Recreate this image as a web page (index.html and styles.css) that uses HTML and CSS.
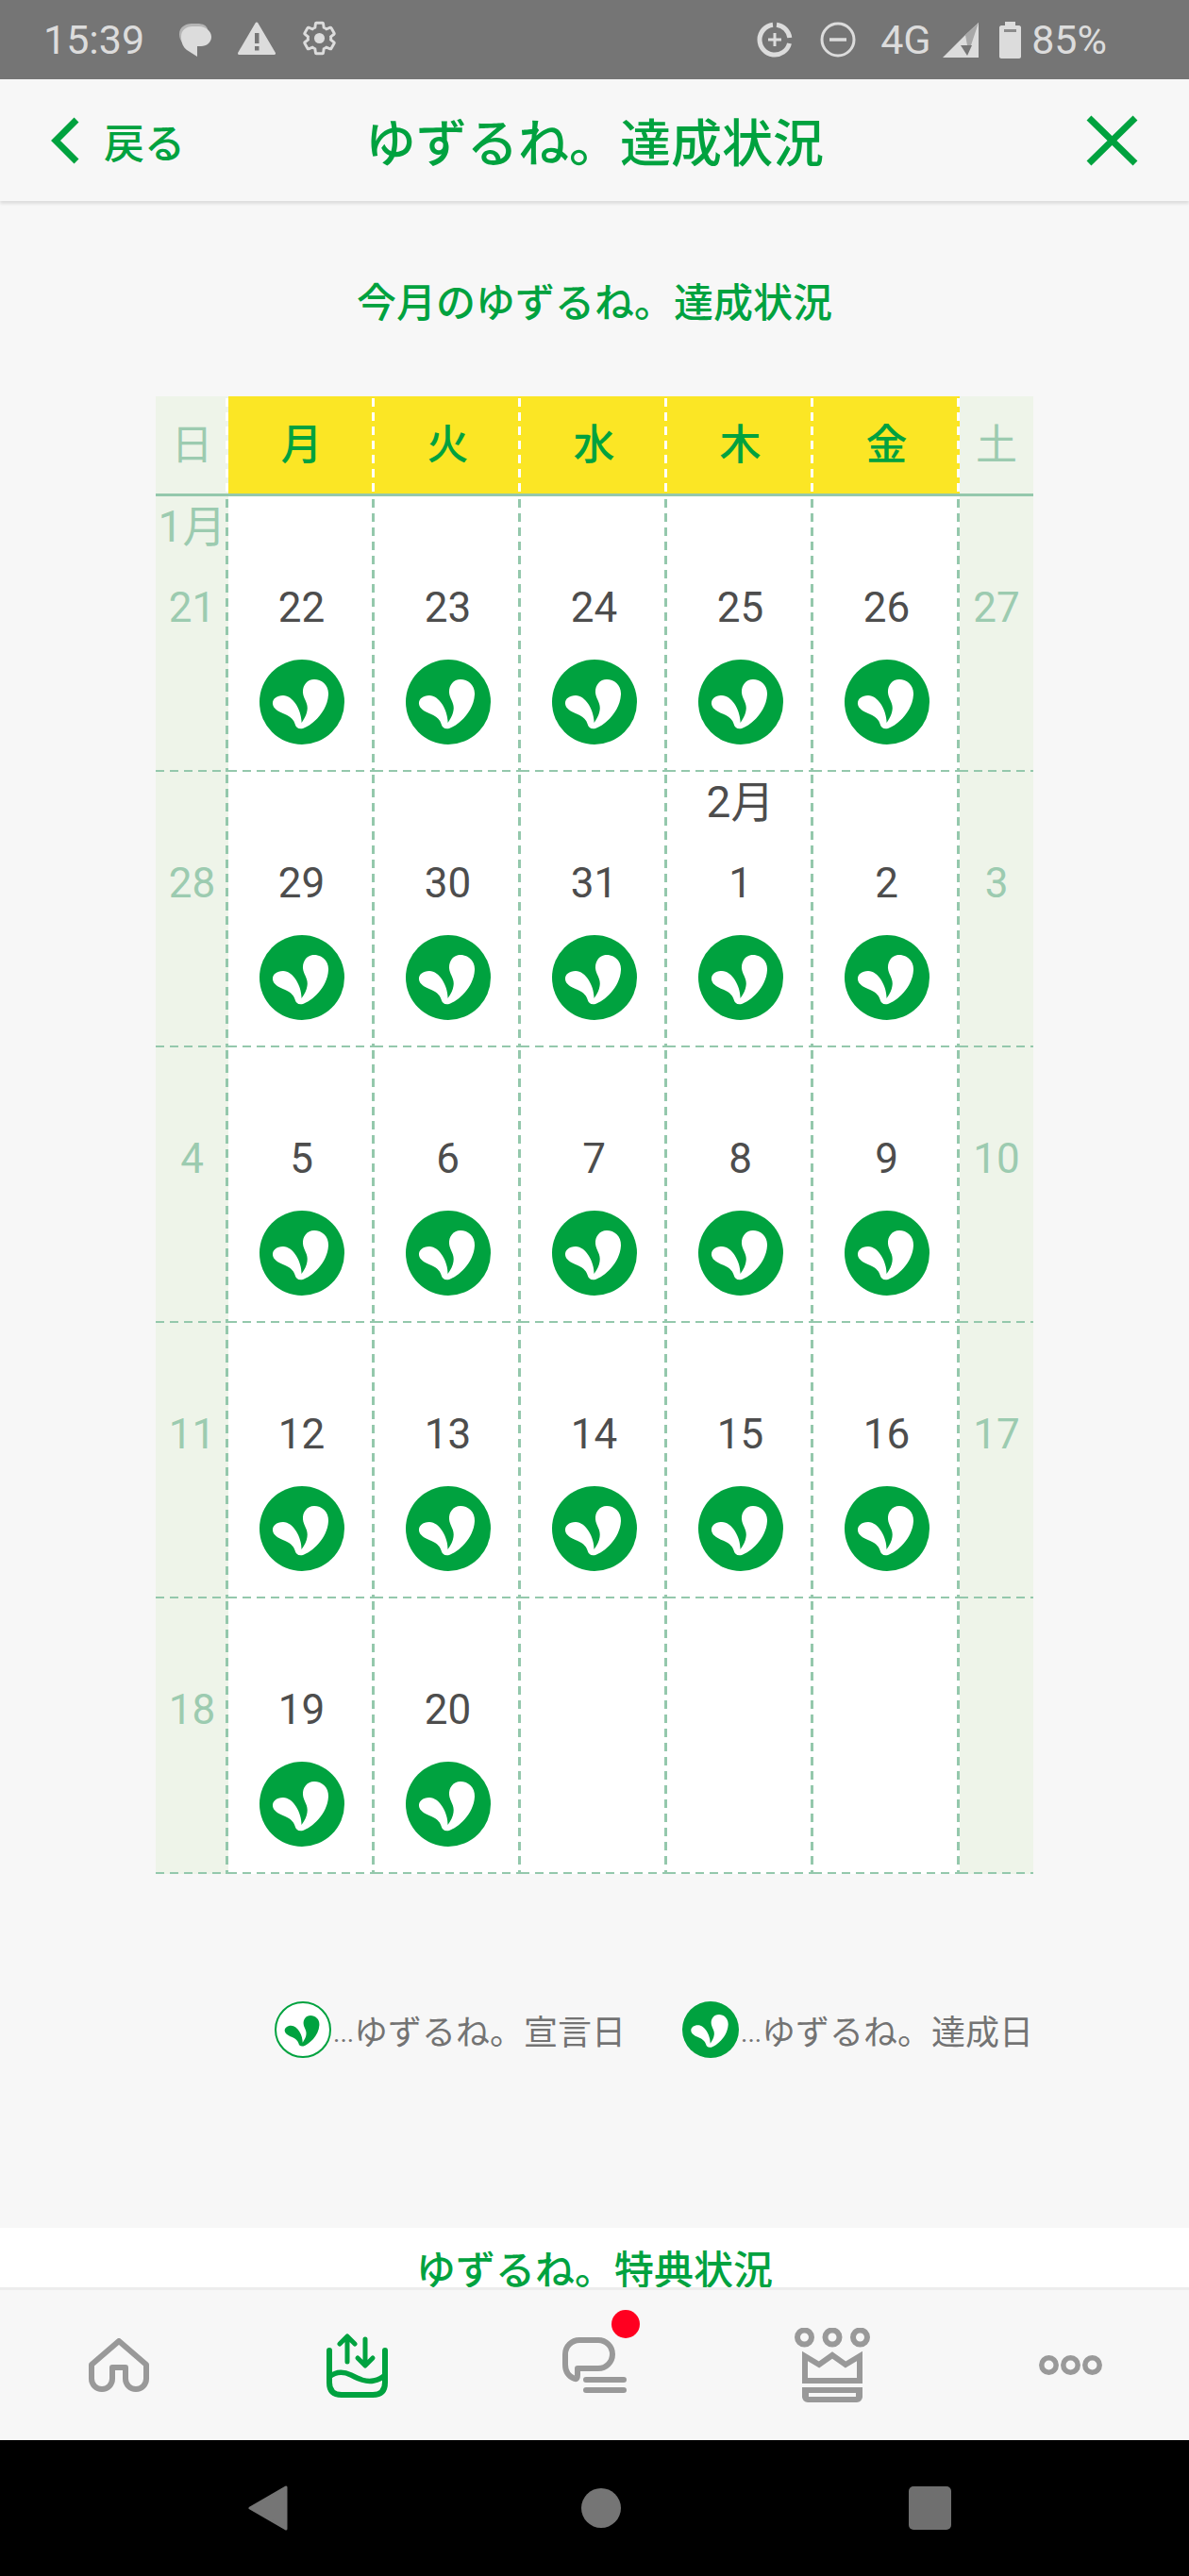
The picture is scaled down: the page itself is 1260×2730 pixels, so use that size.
FILE: index.html
```html
<!DOCTYPE html>
<html lang="ja">
<head>
    <meta charset="UTF-8">
    <meta name="viewport" content="width=device-width, initial-scale=1.0">
    <title>ゆずるね。達成状況</title>
    <link rel="stylesheet" href="styles.css">
</head>
<body>
    <svg class="defs" width="0" height="0">
        <symbol id="leaf" viewBox="0 0 90 90">
            <path d="M46 73C55 70 72 56 73 37C73.5 27 66 21 58 21C50 21 45.5 28 46 35C46.5 42 52 46 50.5 54C50 58 48 62 44.5 67C45 55 36 38 25 38C18 38 13.5 42 14 47C14.5 52 20 55 26 57.5C32 60 36 63 37.5 68C38.5 72 41 74 46 73Z"/>
        </symbol>
        <symbol id="done" viewBox="0 0 90 90">
            <circle cx="45" cy="45" r="45" fill="#00a23f"/>
            <use href="#leaf" width="90" height="90" fill="#fff"/>
        </symbol>
    </svg>

    <div class="status-bar">
        <span class="clock">15:39</span>
        <svg class="st-chat" width="36" height="36" viewBox="0 0 36 36"><path d="M2 12C2 5 8 1 15 1H21C27 1 31 3 32 7L10 26C5 22 2 18 2 12Z" fill="#b5b5b5"/><path d="M4 15C4 8 9 4 16 4H23C30 4 36 9 36 15C36 21 31 25 25 25H21V36L10 29C6 26 4 21 4 15Z" fill="#dcdcdc"/></svg>
        <svg class="st-warn" width="40" height="35" viewBox="0 0 40 35"><path d="M20 2L38.500 33.500H1.500Z" fill="#dcdcdc" stroke="#dcdcdc" stroke-width="3" stroke-linejoin="round"/><path d="M18 12H22.500V23H18ZM18 26H22.500V30.500H18Z" fill="#757575"/></svg>
        <svg class="st-gear" width="39" height="39" viewBox="0 0 24 24"><path d="M19.430 12.980c.04-.32.07-.64.07-.98s-.03-.66-.07-.98l2.110-1.650c.19-.15.24-.42.12-.64l-2-3.460c-.12-.22-.39-.3-.61-.22l-2.490 1c-.52-.4-1.080-.73-1.690-.98l-.38-2.650C14.460 2.180 14.250 2 14 2h-4c-.25 0-.46.18-.49.42l-.38 2.650c-.61.25-1.170.59-1.690.98l-2.490-1c-.23-.09-.49 0-.61.22l-2 3.460c-.13.22-.07.49.12.64l2.110 1.650c-.04.32-.07.65-.07.98s.03.66.07.98l-2.110 1.650c-.19.15-.24.42-.12.64l2 3.460c.12.22.39.3.61.22l2.490-1c.52.4 1.080.73 1.690.98l.38 2.650c.03.24.24.42.49.42h4c.25 0 .46-.18.49-.42l.38-2.650c.61-.25 1.170-.59 1.690-.98l2.490 1c.23.09.49 0 .61-.22l2-3.460c.12-.22.07-.49-.12-.64z" fill="none" stroke="#dcdcdc" stroke-width="1.800"/><circle cx="12" cy="12" r="3.400" fill="#dcdcdc"/></svg>
        <span class="status-space"></span>
        <svg class="st-saver" width="38" height="38" viewBox="0 0 38 38"><path d="M21 3.200A16 16 0 0 1 34.800 17M34.500 23A16 16 0 1 1 17 3.200" fill="none" stroke="#dcdcdc" stroke-width="5"/><path d="M19 12V26M12 19H26" stroke="#dcdcdc" stroke-width="3"/></svg>
        <svg class="st-dnd" width="38" height="38" viewBox="0 0 38 38"><circle cx="19" cy="19" r="17" fill="none" stroke="#dcdcdc" stroke-width="3"/><path d="M10 19H28" stroke="#dcdcdc" stroke-width="3.500"/></svg>
        <span class="net">4G</span>
        <svg class="st-signal" width="38" height="37" viewBox="0 0 38 37"><path d="M38 0V37H0L24 13Z" fill="#dcdcdc"/><path d="M38 0L24 13L26 24H38Z" fill="#a8a8a8"/><path d="M38 0V24H30Z" fill="#dcdcdc"/><path d="M19 25H31L26 36Z" fill="#757575" transform="translate(0,-1)"/></svg>
        <svg class="st-batt" width="23" height="39" viewBox="0 0 23 39"><path d="M6 0H17V4H21C22 4 23 5 23 6V37C23 38 22 39 21 39H2C1 39 0 38 0 37V6C0 5 1 4 2 4H6Z" fill="#dcdcdc"/><rect x="5" y="8" width="13" height="3" fill="#8b8b8b"/></svg>
        <span class="batt-text">85%</span>
    </div>

    <div class="app-header">
        <div class="back-link">
            <svg width="30" height="50" viewBox="0 0 30 50"><path d="M27 3L5 25L27 47" fill="none" stroke="#00a23f" stroke-width="7"/></svg>
            <span>戻る</span>
        </div>
        <h1 class="app-title">ゆずるね。達成状況</h1>
        <div class="close-link">
            <svg width="55" height="54" viewBox="0 0 55 54"><path d="M3 3L52 51M52 3L3 51" fill="none" stroke="#00a23f" stroke-width="7"/></svg>
        </div>
    </div>

    <div class="main">
        <h2 class="sub-title">今月のゆずるね。達成状況</h2>

        <div class="calendar">
            <div class="head off">日</div>
            <div class="head">月</div>
            <div class="head">火</div>
            <div class="head">水</div>
            <div class="head">木</div>
            <div class="head">金</div>
            <div class="head off last">土</div>

            <div class="cell off"><div class="month">1月</div><div class="day">21</div></div>
            <div class="cell"><div class="month"></div><div class="day">22</div><svg class="mark"><use href="#done"/></svg></div>
            <div class="cell"><div class="month"></div><div class="day">23</div><svg class="mark"><use href="#done"/></svg></div>
            <div class="cell"><div class="month"></div><div class="day">24</div><svg class="mark"><use href="#done"/></svg></div>
            <div class="cell"><div class="month"></div><div class="day">25</div><svg class="mark"><use href="#done"/></svg></div>
            <div class="cell"><div class="month"></div><div class="day">26</div><svg class="mark"><use href="#done"/></svg></div>
            <div class="cell off last"><div class="month"></div><div class="day">27</div></div>

            <div class="cell off"><div class="month"></div><div class="day">28</div></div>
            <div class="cell"><div class="month"></div><div class="day">29</div><svg class="mark"><use href="#done"/></svg></div>
            <div class="cell"><div class="month"></div><div class="day">30</div><svg class="mark"><use href="#done"/></svg></div>
            <div class="cell"><div class="month"></div><div class="day">31</div><svg class="mark"><use href="#done"/></svg></div>
            <div class="cell"><div class="month">2月</div><div class="day">1</div><svg class="mark"><use href="#done"/></svg></div>
            <div class="cell"><div class="month"></div><div class="day">2</div><svg class="mark"><use href="#done"/></svg></div>
            <div class="cell off last"><div class="month"></div><div class="day">3</div></div>

            <div class="cell off"><div class="month"></div><div class="day">4</div></div>
            <div class="cell"><div class="month"></div><div class="day">5</div><svg class="mark"><use href="#done"/></svg></div>
            <div class="cell"><div class="month"></div><div class="day">6</div><svg class="mark"><use href="#done"/></svg></div>
            <div class="cell"><div class="month"></div><div class="day">7</div><svg class="mark"><use href="#done"/></svg></div>
            <div class="cell"><div class="month"></div><div class="day">8</div><svg class="mark"><use href="#done"/></svg></div>
            <div class="cell"><div class="month"></div><div class="day">9</div><svg class="mark"><use href="#done"/></svg></div>
            <div class="cell off last"><div class="month"></div><div class="day">10</div></div>

            <div class="cell off"><div class="month"></div><div class="day">11</div></div>
            <div class="cell"><div class="month"></div><div class="day">12</div><svg class="mark"><use href="#done"/></svg></div>
            <div class="cell"><div class="month"></div><div class="day">13</div><svg class="mark"><use href="#done"/></svg></div>
            <div class="cell"><div class="month"></div><div class="day">14</div><svg class="mark"><use href="#done"/></svg></div>
            <div class="cell"><div class="month"></div><div class="day">15</div><svg class="mark"><use href="#done"/></svg></div>
            <div class="cell"><div class="month"></div><div class="day">16</div><svg class="mark"><use href="#done"/></svg></div>
            <div class="cell off last"><div class="month"></div><div class="day">17</div></div>

            <div class="cell off"><div class="month"></div><div class="day">18</div></div>
            <div class="cell"><div class="month"></div><div class="day">19</div><svg class="mark"><use href="#done"/></svg></div>
            <div class="cell"><div class="month"></div><div class="day">20</div><svg class="mark"><use href="#done"/></svg></div>
            <div class="cell"></div>
            <div class="cell"></div>
            <div class="cell"></div>
            <div class="cell off last"></div>
        </div>

        <div class="legend">
            <div class="legend-item">
                <svg class="legend-icon outline"><use href="#leaf" fill="#00a23f"/></svg>
                <span class="dots">...</span><span>ゆずるね。宣言日</span>
            </div>
            <div class="legend-item">
                <svg class="legend-icon"><use href="#done"/></svg>
                <span class="dots">...</span><span>ゆずるね。達成日</span>
            </div>
        </div>

        <div class="perk-section">
            <h2 class="sub-title perk-title">ゆずるね。特典状況</h2>
        </div>
    </div>

    <div class="tab-bar">
        <div class="tab">
            <svg width="64" height="57" viewBox="0 0 64 57"><path d="M32 3L3 28V43A11 11 0 0 0 25 43V31H39V43A11 11 0 0 0 61 43V28Z" fill="none" stroke="#999" stroke-width="6" stroke-linejoin="round"/></svg>
        </div>
        <div class="tab">
            <svg width="65" height="68" viewBox="0 0 65 68"><g fill="none" stroke="#00a23f" stroke-width="6" stroke-linecap="round" stroke-linejoin="round"><path d="M3 18V52Q3 65 16 65H49Q62 65 62 52V18"/><path d="M3 46C10 40 18 40 26 44C34 48 42 52 50 50C55 49 59 47 62 44" stroke-width="5.500"/><path d="M22 30V3M14 11L22 3L30 11" stroke-width="5"/><path d="M41 6V33M33 26L41 34L49 26" stroke-width="5"/></g></svg>
        </div>
        <div class="tab">
            <div class="chat-icon">
                <svg width="68" height="59" viewBox="0 0 68 59"><g fill="none" stroke="#999" stroke-width="6" stroke-linecap="round" stroke-linejoin="round"><path d="M16 33H38A15 15 0 0 0 53 18A15 15 0 0 0 38 3H18A15 15 0 0 0 3 18V29Q3 40 13 44Q16 45 16 40Z"/><path d="M25 45H65M25 56H65"/></g></svg>
                <span class="badge"></span>
            </div>
        </div>
        <div class="tab">
            <svg width="80" height="79" viewBox="0 0 80 79"><g fill="none" stroke="#999" stroke-width="6"><circle cx="10.500" cy="10" r="7.500"/><circle cx="40" cy="10" r="7.500"/><circle cx="69.500" cy="10" r="7.500"/><path d="M11 30L26 39L40 29L54 39L69 30V56H11Z"/></g><path fill-rule="evenodd" d="M8 63H72V73A6 6 0 0 1 66 79H14A6 6 0 0 1 8 73ZM15 69V73H65V69Z" fill="#999"/></svg>
        </div>
        <div class="tab">
            <svg width="67" height="21" viewBox="0 0 67 21"><g fill="none" stroke="#999" stroke-width="5.500"><circle cx="10.500" cy="10.500" r="7.700"/><circle cx="33.500" cy="10.500" r="7.700"/><circle cx="56.500" cy="10.500" r="7.700"/></g></svg>
        </div>
    </div>

    <div class="nav-bar">
        <svg width="42" height="48" viewBox="0 0 42 48"><path d="M40 2V46L2 24Z" fill="#757575" stroke="#757575" stroke-width="3" stroke-linejoin="round"/></svg>
        <span class="nav-home"></span>
        <span class="nav-square"></span>
    </div>
</body>
</html>
```

FILE: styles.css
```css
body {
    margin: 0;
    height: 2730px;
    display: flex;
    flex-direction: column;
    overflow: hidden;
    background-color: #f7f7f7;
    color: #4d4d4d;
    font-family: Roboto, "Noto Sans CJK JP", sans-serif;
}
svg {
    display: block;
    flex: none;
}
.defs {
    position: absolute;
}

/* status bar */
.status-bar {
    height: 84px;
    flex: none;
    display: flex;
    align-items: center;
    padding: 0 87px 0 46px;
    background-color: #757575;
    color: #dcdcdc;
    font-size: 43px;
}
.clock {
    width: 142px;
}
.st-warn {
    margin: 0 0 3px 28px;
}
.st-gear {
    margin: 0 0 3px 27px;
}
.status-space {
    flex: 1;
}
.st-dnd {
    margin-left: 29px;
}
.net {
    margin-left: 26px;
    width: 66px;
}
.st-batt {
    margin-left: 22px;
}
.batt-text {
    margin-left: 11px;
}

/* page header */
.app-header {
    height: 129px;
    flex: none;
    position: relative;
    z-index: 1;
    display: grid;
    grid-template-columns: 1fr auto 1fr;
    align-items: center;
    padding: 0 54px;
    background-color: #f7f7f7;
    box-shadow: 0 3px 3px rgba(0, 0, 0, 0.1);
    color: #00a23f;
}
.back-link {
    display: flex;
    align-items: center;
    gap: 26px;
    font-size: 43px;
    font-weight: 500;
}
.app-title {
    margin: 0;
    font-size: 54px;
    font-weight: 500;
}
.close-link {
    justify-self: end;
}

/* main area */
.main {
    flex: 1;
    overflow: hidden;
}
.sub-title {
    margin: 0;
    padding-top: 79px;
    line-height: 60px;
    text-align: center;
    font-size: 42px;
    font-weight: 500;
    color: #00a23f;
}

/* calendar */
.calendar {
    width: 930px;
    margin: 68px 0 0 165px;
    display: grid;
    grid-template-columns: 77px repeat(5, 155px) 78px;
    grid-template-rows: 106px repeat(5, 292px);
}
.head {
    display: flex;
    align-items: center;
    justify-content: center;
    padding-bottom: 7px;
    background:
        linear-gradient(#fff 0 9px, transparent 9px) right top 2px / 3px 15px repeat-y,
        #fbe625;
    border-bottom: 3px solid #94c8ac;
    box-sizing: border-box;
    font-size: 44px;
    font-weight: 500;
    color: #00a23f;
}
.head.off {
    background:
        linear-gradient(#fff 0 9px, transparent 9px) right top 2px / 3px 15px repeat-y,
        #eef4e9;
    color: #9ccbb0;
    font-weight: 400;
}
.head.last {
    background: #eef4e9;
}
.cell {
    display: flex;
    flex-direction: column;
    align-items: center;
    background:
        linear-gradient(#94c8ac 0 9px, transparent 9px) right top 3px / 3px 15px repeat-y,
        linear-gradient(to right, #94c8ac 0 9px, transparent 9px) left bottom / 15px 2px repeat-x,
        #fff;
    font-size: 44px;
}
.cell.off {
    background:
        linear-gradient(#94c8ac 0 9px, transparent 9px) right top 3px / 3px 15px repeat-y,
        linear-gradient(to right, #94c8ac 0 9px, transparent 9px) left bottom / 15px 2px repeat-x,
        #eef4e9;
    color: #9ccbb0;
}
.cell.last {
    background:
        linear-gradient(to right, #94c8ac 0 9px, transparent 9px) left bottom / 15px 2px repeat-x,
        #eef4e9;
}
.month {
    height: 64px;
    line-height: 64px;
    font-size: 46px;
}
.day {
    height: 108px;
    line-height: 108px;
}
.mark {
    width: 90px;
    height: 90px;
    margin-top: 1px;
}

/* legend */
.legend {
    display: flex;
    margin: 135px 0 0 291px;
    gap: 60px;
    font-size: 36px;
    color: #737373;
}
.legend-item {
    display: flex;
    align-items: center;
    height: 60px;
}
.legend-icon {
    width: 60px;
    height: 60px;
}
.legend-icon.outline {
    box-sizing: border-box;
    border: 2px solid #00a23f;
    border-radius: 50%;
    background-color: #fff;
}
.dots {
    width: 22px;
    margin-left: 2px;
    align-self: flex-end;
    line-height: 52px;
    font-size: 28px;
}

/* next section, cut off by the tab bar */
.perk-section {
    margin-top: 180px;
    height: 100px;
    background-color: #fff;
}
.perk-title {
    padding-top: 16px;
}

/* bottom tabs */
.tab-bar {
    height: 159px;
    flex: none;
    display: grid;
    grid-template-columns: repeat(5, 252px);
    align-items: center;
    justify-items: center;
    border-top: 3px solid #ededed;
    background-color: #f7f7f7;
}
.chat-icon {
    position: relative;
}
.badge {
    position: absolute;
    top: -29px;
    right: -14px;
    width: 30px;
    height: 30px;
    border-radius: 50%;
    background-color: #ff0020;
}

/* android nav */
.nav-bar {
    height: 144px;
    flex: none;
    display: flex;
    align-items: center;
    padding-left: 263px;
    background-color: #000;
}
.nav-home {
    width: 42px;
    height: 42px;
    margin-left: 311px;
    border-radius: 50%;
    background-color: #757575;
}
.nav-square {
    width: 45px;
    height: 46px;
    margin-left: 305px;
    border-radius: 5px;
    background-color: #6f6f6f;
}
```
